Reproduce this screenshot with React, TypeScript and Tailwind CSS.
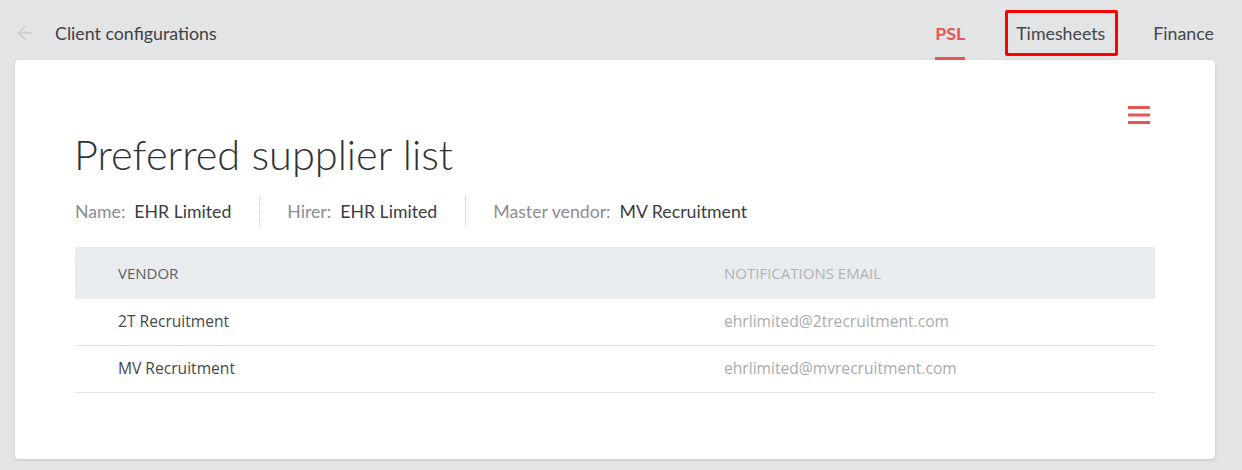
import { ArrowLeft } from 'lucide-react';

const rows = [
  { vendor: '2T Recruitment', email: 'ehrlimited@2trecruitment.com' },
  { vendor: 'MV Recruitment', email: 'ehrlimited@mvrecruitment.com' },
];

function Meta({ label, value, last }: { label: string; value: string; last?: boolean }) {
  return (
    <div className={`flex items-center h-[32px] ${last ? '' : 'border-r border-dotted border-[#d0d0d0] pr-[28px] mr-[27px]'}`}>
      <span className="text-[#8a8d91]">{label}</span>
      <span className="ml-[9px] text-[#3a3d42]">{value}</span>
    </div>
  );
}

export default function App() {
  return (
    <div className="w-[1242px] h-[470px] bg-[#e3e4e6] font-['Lato','Noto_Sans',sans-serif] overflow-hidden">
      <div className="flex items-stretch h-[60px] pl-[14px] pr-[28px] pt-[6px]">
        <div className="flex items-center">
          <ArrowLeft size={22} strokeWidth={1.5} className="text-[#c9cacc]" />
          <span className="ml-[19px] text-[17.8px] text-[#3f4145]">Client configurations</span>
        </div>
        <div className="ml-auto flex items-stretch text-[17.8px]">
          <div className="relative flex items-center font-bold text-[#ea5452]">
            PSL
            <span className="absolute left-0 right-0 bottom-0 h-[3px] bg-[#ea5452]" />
          </div>
          <div className="ml-[40px] flex items-center">
            <div className="border-[3px] border-[#ff0000] rounded-[2px] h-[46px] pl-[8px] pr-[10px] flex items-center text-[#44474b]">
              Timesheets
            </div>
          </div>
          <div className="ml-[35px] flex items-center text-[#44474b]">Finance</div>
        </div>
      </div>

      <div className="mx-[15px] w-[1200px] h-[399px] bg-white rounded-[4px] shadow-[0_1px_3px_rgba(0,0,0,0.15)] px-[60px] pt-[46px]">
        <div className="flex justify-end pr-[5px]">
          <svg width="22" height="18" viewBox="0 0 22 18">
            <rect x="0" y="0" width="22" height="3" fill="#ea5452" />
            <rect x="0" y="7.5" width="22" height="3" fill="#ea5452" />
            <rect x="0" y="15" width="22" height="3" fill="#ea5452" />
          </svg>
        </div>
        <h1 className="mt-[6px] text-[41.5px] leading-[48px] font-light text-[#2f3236] -ml-[1px]">Preferred supplier list</h1>
        <div className="mt-[18px] flex items-center text-[17.7px]">
          <Meta label="Name:" value="EHR Limited" />
          <Meta label="Hirer:" value="EHR Limited" />
          <Meta label="Master vendor:" value="MV Recruitment" last />
        </div>
        <div className="mt-[19px] font-['Open_Sans','Noto_Sans',sans-serif]">
          <div className="grid grid-cols-[606px_1fr] h-[52px] items-center bg-[#e9ecef] text-[15px] uppercase">
            <div className="pl-[43px] text-[#5c5f63]">Vendor</div>
            <div className="pl-[43px] text-[#b0b3b6]">Notifications email</div>
          </div>
          {rows.map(r => (
            <div key={r.vendor} className="grid grid-cols-[606px_1fr] h-[47px] items-center border-b border-[#e1e3e5] text-[15.6px]">
              <div className="pl-[43px] text-[#45484c]">{r.vendor}</div>
              <div className="pl-[43px] text-[#a8abae]">{r.email}</div>
            </div>
          ))}
        </div>
      </div>
    </div>
  );
}
